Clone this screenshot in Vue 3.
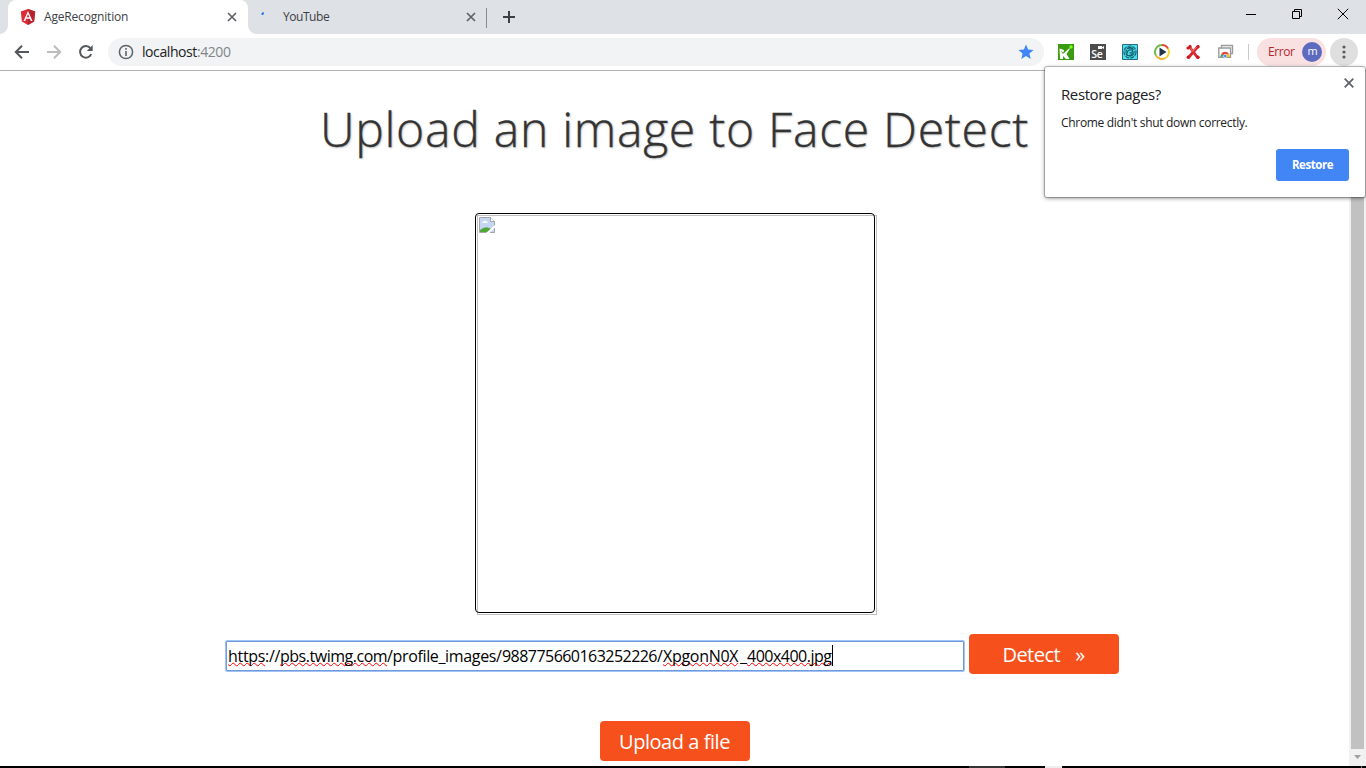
<script setup>
const urlParts = [
  { text: 'https', width: 37, spacing: -0.3, wavy: true },
  { text: '://', width: 15, spacing: -0.3 },
  { text: 'pbs.twimg.com', width: 107, spacing: -0.48, wavy: true },
  { text: '/profile_images/', width: 115, spacing: -0.35 },
  { text: '988775660163252226', width: 155, spacing: -0.54 },
  { text: '/', width: 6, spacing: 0 },
  { text: 'XpgonN0X', width: 77, spacing: -0.3, wavy: true },
  { text: '_', width: 7, spacing: 0 },
  { text: '400x400.jpg', width: 85, spacing: -0.5, wavy: true }
]
</script>

<template>
  <div class="window">
    <header class="tabs">
      <div class="tab active">
        <svg class="favicon" width="16" height="16" viewBox="0 0 16 16">
          <path d="M8 0 15.2 2.6 14.1 12.5 8 16 1.9 12.5.8 2.6Z" fill="#dd2b35" />
          <path d="M8 0 15.2 2.6 14.1 12.5 8 16Z" fill="#b9232e" />
          <path fill="#fff" fill-rule="evenodd" d="M8 2 3.5 12h1.7l.9-2.2h3.8l.9 2.2h1.7ZM8 5.1l1.3 3.2H6.7Z" />
        </svg>
        <span class="name">AgeRecognition</span>
        <svg class="close" width="10" height="10" viewBox="0 0 10 10"><path d="M1 1 9 9M9 1 1 9" /></svg>
      </div>
      <div class="tab second">
        <svg class="favicon" width="16" height="16" viewBox="0 0 16 16"><path d="m3.4 5 .7-.8" stroke="#1a73e8" stroke-width="2" stroke-linecap="round" /></svg>
        <span class="name tight">YouTube</span>
        <svg class="close" width="10" height="10" viewBox="0 0 10 10"><path d="M1 1 9 9M9 1 1 9" /></svg>
      </div>
      <svg class="plus" width="12" height="12" viewBox="0 0 12 12"><path d="M6 0V12M0 6H12" stroke="#3c4043" stroke-width="2" /></svg>
      <div class="controls">
        <svg width="12" height="12" viewBox="0 0 12 12"><path d="M1 6.5H11" /></svg>
        <svg width="12" height="12" viewBox="0 0 12 12"><path d="M1.5 3.5h7v7h-7zM3.5 3.5v-2h7v7h-2" /></svg>
        <svg width="12" height="12" viewBox="0 0 12 12"><path d="M.8.8 11.2 11.2M11.2.8.8 11.2" /></svg>
      </div>
    </header>

    <div class="toolbar">
      <div class="nav">
        <svg width="16" height="16" viewBox="0 0 16 16"><path d="M15 8H2M8 1.7 1.8 8 8 14.3" stroke="#54575b" /></svg>
        <svg width="16" height="16" viewBox="0 0 16 16"><path d="M1 8h13M8 1.7 14.2 8 8 14.3" stroke="#babcbe" /></svg>
        <svg width="16" height="16" viewBox="0 0 16 16"><path d="M13.2 10.2A5.8 5.8 0 1 1 12.4 4.2" stroke="#54575b" /><path d="M14.7 1v6H8.8Z" fill="#54575b" stroke="none" /></svg>
      </div>
      <div class="omnibox">
        <svg width="16" height="16" viewBox="0 0 16 16"><circle cx="8" cy="8" r="6.6" fill="none" stroke="#5f6368" stroke-width="1.5" /><path d="M8 7v5M8 4v1.7" stroke="#5f6368" stroke-width="1.6" /></svg>
        <span class="address">localhost<i>:4200</i></span>
        <svg class="star" width="16" height="16" viewBox="0 0 16 16"><path d="m8 .4 2.1 5.2 5.5.4-4.2 3.5 1.3 5.4L8 12l-4.7 2.9 1.3-5.4L.4 6l5.5-.4Z" fill="#4285f4" /></svg>
      </div>
      <div class="extensions">
        <svg width="16" height="16" viewBox="0 0 16 16"><path d="M0 0h16v16H0z" fill="#399b10" /><path d="M1.5 4.5 6 6v3l5-4.5h1L8.5 10l3 5H8l-3-3v3H2Z" fill="#fff" /><path d="M3.5 7.5 5 9.4l2-3" fill="none" stroke="#399b10" /><circle cx="13" cy="3" r="1.7" fill="#79ff20" /></svg>
        <svg width="16" height="16" viewBox="0 0 16 16"><path d="M0 0h16v16H0z" fill="#4c4c4c" /><text x="1.2" y="14" class="se">Se</text><path d="M8 2h4v3H8zM12 3.3 14 2v3l-2-1Z" fill="#fff" /></svg>
        <svg width="16" height="16" viewBox="0 0 16 16"><path d="M.5.5h15v15H.5z" fill="#4ce0ea" stroke="#266b80" /><g fill="none" stroke="#145f70" stroke-width="1.2"><circle cx="8" cy="8" r="6" stroke-dasharray="4 1" /><circle cx="8" cy="8" r="4.1" stroke-dasharray="7 1" /><path d="M5.5 9.5Q5 6 8 5.8T10.3 8Q10 9.3 7.5 8.7M4.5 11Q8 13 11 9.5M5 4.6Q8 2.6 11 5" /></g></svg>
        <svg width="16" height="16" viewBox="0 0 16 16"><circle cx="8" cy="8" r="7" fill="#fff" /><g fill="none" stroke-width="2"><path d="M8 1a7 7 0 0 0-6 10.5" stroke="#70bb48" /><path d="M2 11.5A7 7 0 0 0 11.5 14" stroke="#efb12c" /><path d="M11.5 14A7 7 0 0 0 14 4.5" stroke="#f0d233" /><path d="M14 4.5A7 7 0 0 0 8 1" stroke="#e84b3d" /></g><path d="m5.5 3.5 7 4.5-7 4.5Z" fill="#203548" /></svg>
        <svg class="red-x" width="16" height="16" viewBox="0 0 16 16"><path d="m5 3.5 7.5 10M12.5 3 4 13" stroke="#d9272b" stroke-width="2.8" stroke-linecap="round" /><g fill="#ce171c"><circle cx="3" cy="4" r="1.6" /><circle cx="5" cy="2.2" r="1.5" /><circle cx="13" cy="2.8" r="1.8" /><circle cx="3.3" cy="13.3" r="1.7" /><circle cx="13" cy="13.2" r="1.7" /></g><path d="m5.5 4 2.3 3.5L12 2.6" fill="none" stroke="#ee7070" /></svg>
        <svg width="16" height="16" viewBox="0 0 16 16"><path d="M3.5 3.5v-2h11v8h-2M.8 4h11.7v9.3H.8z" fill="#fff" stroke="#9a9c9f" stroke-width="1.4" /><path d="M2.5 13a4.6 4.6 0 0 1 .8-3L7 12Z" fill="#25a464" /><path d="M3.2 10A4.5 4.5 0 0 1 11 10L7 12Z" fill="#e84335" /><path d="M7 10h4a5 5 0 0 1 .7 3H7Z" fill="#f9bc15" /><circle cx="7.2" cy="12" r="1.7" fill="#4285f4" stroke="#fff" stroke-width=".6" /></svg>
      </div>
      <span class="divider"></span>
      <div class="profile"><span>Error</span><b>m</b></div>
      <div class="menu"><svg width="4" height="16" viewBox="0 0 4 16" fill="#5a5d61"><circle cx="2" cy="3" r="1.6" /><circle cx="2" cy="8" r="1.6" /><circle cx="2" cy="13" r="1.6" /></svg></div>
    </div>

    <div class="viewport">
      <main>
        <h1>Upload an image to Face Detect</h1>
        <div class="preview">
          <div class="image">
            <svg width="16" height="16" viewBox="0 0 16 16">
              <path d="M.5.5h11l4 4v11H.5Z" fill="#c5d6f5" stroke="#a5a5a5" />
              <path d="M1 15v-2Q7 8 12 12v3Z" fill="#50a83b" />
              <path d="M3 6q0-2 2-1.5Q6 2.5 7.5 4.5 9 4.5 8.8 6Z" fill="#fff" />
              <path d="m7 16 9-8v2.5L10.5 16Z" fill="#fff" />
              <path d="M11.5.5v4h4" fill="#fff" stroke="#a5a5a5" />
            </svg>
          </div>
          <div class="canvas"></div>
        </div>
        <div class="form">
          <div class="field">
            <span v-for="part in urlParts" :key="part.text" class="part" :class="{ wavy: part.wavy }" :style="{ width: part.width + 'px', letterSpacing: part.spacing + 'px' }">{{ part.text }}</span><span class="caret"></span>
          </div>
          <button class="action detect">Detect<span>»</span></button>
        </div>
        <button class="action upload">Upload a file</button>
      </main>
      <div class="scrollbar">
        <div class="thumb"></div>
        <svg width="7" height="4" viewBox="0 0 7 4"><path d="M0 0h7L3.5 4Z" fill="#a0a0a0" /></svg>
      </div>
    </div>
    <footer class="taskbar"><i class="running"></i><i class="current"></i><i class="edge"></i></footer>

    <aside class="bubble">
      <svg class="dismiss" width="10" height="10" viewBox="0 0 10 10"><path d="M.7.7 9.3 9.3M9.3.7.7 9.3" /></svg>
      <h2>Restore pages?</h2>
      <p>Chrome didn't shut down correctly.</p>
      <button>Restore</button>
    </aside>
  </div>
</template>

<style>
body { overflow: hidden; }
</style>

<style scoped>
.window { position: relative; display: flex; flex-direction: column; width: 1366px; height: 768px; background: #fff; font-family: "Open Sans", "Noto Sans", sans-serif; color: #202124; overflow: hidden; }
.window * { box-sizing: border-box; }
svg { display: block; flex: none; }
button { border: 0; padding: 0; font-family: inherit; }
.tabs { display: flex; flex: none; height: 34px; padding-left: 8px; background: #dee1e6; }
.tab { position: relative; display: flex; align-items: center; width: 240px; padding: 0 11px 1px 12px; font-size: 12px; color: #3c4043; }
.tab.active { background: #fff; border-radius: 8px 8px 0 0; }
.tab.active::before, .tab.active::after { content: ""; position: absolute; bottom: 0; width: 8px; height: 8px; }
.tab.active::before { left: -8px; background: radial-gradient(circle at 0 0, transparent 7.5px, #fff 8px); }
.tab.active::after { right: -8px; background: radial-gradient(circle at 100% 0, transparent 7.5px, #fff 8px); }
.tab.second { width: 239px; padding-left: 11px; }
.tab.second::after { content: ""; position: absolute; right: 0; top: 8px; width: 1px; height: 20px; background: #888b90; }
.name { margin-left: 8px; letter-spacing: -.18px; line-height: 16px; }
.name.tight { letter-spacing: -.45px; }
.close { margin-left: auto; stroke: #5f6368; stroke-width: 1.7; }
.plus { margin: 11px 0 0 16px; }
.controls { display: flex; gap: 34px; margin: 8px 17px 0 auto; fill: none; stroke: #000; stroke-width: 1; }
.toolbar { display: flex; flex: none; align-items: center; height: 37px; padding: 0 8px 1px 14px; border-bottom: 1px solid #b0b0b0; background: #fff; }
.nav { display: flex; gap: 16px; margin-right: 14px; fill: none; stroke-width: 2; }
.omnibox { display: flex; align-items: center; width: 936px; height: 28px; padding: 0 10px; border-radius: 14px; background: #f1f3f4; }
.address { margin-left: 8px; font-size: 14px; letter-spacing: -.42px; }
.address i { font-style: normal; color: #80868b; }
.star { margin-left: auto; }
.extensions { display: flex; gap: 16px; margin-left: 14px; }
.red-x { margin: 0 1px 0 -1px; }
.se { font: 600 10.5px "Open Sans", sans-serif; letter-spacing: -.3px; fill: #fff; }
.divider { width: 1px; height: 16px; margin: 0 8px 0 14px; background: #c8cacd; }
.profile { display: flex; align-items: center; width: 69px; height: 28px; padding-left: 11px; border-radius: 14px; background: #fae1e1; color: #b3262d; font-size: 12px; letter-spacing: -.45px; }
.profile b { width: 20px; height: 20px; margin-left: 8px; border-radius: 50%; background: #5c6bc0; color: #fff; font-size: 11px; font-weight: 400; line-height: 18px; text-align: center; }
.menu { display: grid; place-items: center; width: 28px; height: 28px; margin-left: 4px; border-radius: 50%; background: #dfdfdf; }
.viewport { display: flex; flex: 1; min-height: 0; }
main { display: flex; flex: 1; flex-direction: column; align-items: center; }
h1 { margin: 25px 0 0; height: 117px; color: #333; font-size: 48px; font-weight: 300; line-height: 66px; letter-spacing: .75px; -webkit-text-stroke: .35px #333; text-shadow: 1px 1px 2px rgba(0, 0, 0, .28); white-space: nowrap; }
.preview { position: relative; width: 400px; height: 400px; flex: none; }
.image { position: absolute; left: 2px; top: 2px; width: 400px; height: 400px; padding: 1px; border: 1px solid #c0c0c0; }
.canvas { position: absolute; inset: 0; border: 1px solid #000; border-radius: 4px; }
.form { display: flex; flex: none; gap: 4px; width: 894px; height: 40px; margin: 21px 0 47px -5px; }
.field { display: flex; align-items: center; width: 740px; height: 32px; margin-top: 6px; padding: 0 0 0 2px; border: 1px solid #9fc2f7; border-radius: 2px; box-shadow: inset 0 0 0 1px #7199d8; color: #000; font-size: 16px; white-space: nowrap; }
.part { flex: none; line-height: 22px; }
.wavy { text-decoration: underline wavy #f00 1px; text-decoration-skip-ink: none; text-underline-offset: 0; }
.caret { width: 1px; height: 21px; margin: 0 0 2px; background: #000; }
.action { flex: none; width: 150px; height: 40px; padding-top: 1px; border-radius: 4px; background: #f6511d; color: #fff; font-size: 20px; letter-spacing: -.45px; line-height: 39px; }
.detect { padding-right: 1px; letter-spacing: -.5px; }
.detect span { margin-left: 15px; }
.scrollbar { display: flex; flex-direction: column; align-items: center; width: 17px; background: #f1f1f1; }
.thumb { width: 13px; height: 661px; margin: 17px 0 6px; background: #c1c1c1; }
.taskbar { display: flex; height: 2px; flex: none; background: #000; }
.running { width: 36px; margin-left: 969px; background: #333; }
.current { width: 17px; margin-left: 40px; background: #eee; }
.edge { width: 1px; margin-left: 299px; background: #777; }
.bubble { position: absolute; top: 67px; left: 1045px; width: 320px; height: 130px; padding: 17px 16px 16px; border-radius: 2px; background: #fff; box-shadow: 0 0 0 1px rgba(0, 0, 0, .2), 0 1px 4px rgba(0, 0, 0, .5); }
.bubble h2 { margin: 0; font-size: 15px; font-weight: 400; line-height: 20px; letter-spacing: -.4px; }
.bubble p { margin: 10px 0 0; font-size: 12px; line-height: 18px; letter-spacing: -.31px; }
.bubble button { display: block; width: 73px; height: 32px; margin: 17px 0 0 auto; padding-bottom: 1px; border-radius: 3px; background: #4285f4; color: #fff; font-size: 11.5px; font-weight: 700; letter-spacing: -.45px; }
.dismiss { position: absolute; top: 11px; right: 11px; stroke: #5f6368; stroke-width: 1.8; }
</style>
